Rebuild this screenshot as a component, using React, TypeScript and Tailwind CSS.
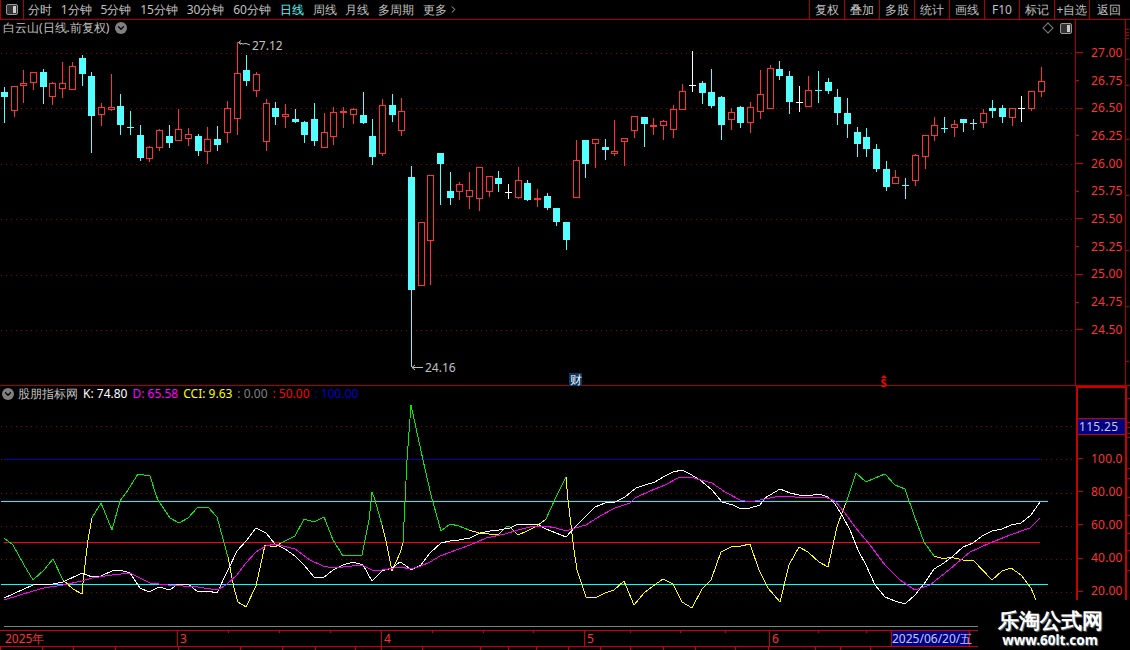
import { ChevronDown, ChevronRight } from "lucide-react";

type Candle = [number, number, number, number, "c" | "r" | "w"];

// high, body top, body bottom, low (pixel rows of the screenshot)
const candles: Candle[] = [
  [87, 92, 97, 123, "c"], [86, 86, 111, 117, "r"], [70, 83, 86, 103, "r"], [72, 72, 83, 90, "r"],
  [69, 72, 87, 104, "c"], [82, 83, 97, 105, "r"], [62, 83, 89, 98, "r"], [62, 66, 90, 90, "r"],
  [55, 58, 74, 86, "c"], [72, 76, 116, 153, "c"], [103, 107, 115, 126, "r"], [74, 107, 110, 111, "r"],
  [94, 106, 125, 135, "c"], [111, 127, 127, 135, "c"], [125, 135, 158, 161, "c"], [146, 147, 159, 162, "r"],
  [129, 130, 148, 151, "r"], [125, 136, 143, 148, "c"], [109, 129, 141, 141, "r"], [128, 134, 139, 146, "r"],
  [134, 136, 151, 156, "c"], [127, 139, 152, 164, "r"], [126, 139, 145, 151, "c"], [101, 108, 133, 143, "r"],
  [42, 73, 119, 135, "r"], [55, 70, 81, 86, "c"], [72, 74, 91, 97, "r"], [99, 103, 142, 151, "r"],
  [102, 108, 117, 125, "c"], [104, 114, 117, 128, "r"], [109, 119, 122, 123, "c"], [121, 122, 135, 143, "c"],
  [103, 119, 141, 146, "c"], [113, 132, 148, 148, "r"], [107, 112, 137, 145, "r"], [107, 111, 113, 128, "r"],
  [108, 109, 115, 124, "r"], [92, 115, 123, 124, "c"], [119, 136, 157, 165, "c"], [99, 105, 154, 156, "r"],
  [94, 105, 115, 122, "c"], [98, 111, 131, 136, "r"], [166, 177, 290, 367, "c"], [222, 222, 286, 286, "r"],
  [175, 175, 241, 285, "r"], [153, 153, 164, 205, "c"], [172, 191, 198, 205, "c"], [182, 184, 192, 200, "r"],
  [172, 190, 197, 209, "r"], [167, 167, 199, 211, "r"], [176, 176, 192, 197, "r"], [171, 178, 184, 192, "c"],
  [184, 192, 192, 199, "w"], [167, 180, 198, 199, "r"], [180, 183, 200, 201, "c"], [189, 198, 200, 207, "r"],
  [193, 196, 208, 210, "c"], [208, 208, 222, 226, "c"], [222, 222, 240, 250, "c"], [140, 160, 198, 198, "r"],
  [140, 140, 164, 178, "c"], [139, 139, 144, 168, "r"], [139, 147, 150, 160, "c"], [120, 151, 154, 156, "r"],
  [138, 138, 142, 166, "r"], [116, 116, 131, 138, "r"], [117, 117, 124, 147, "c"], [118, 125, 127, 135, "r"],
  [120, 121, 126, 140, "r"], [105, 109, 130, 138, "r"], [84, 91, 110, 110, "r"], [51, 85, 85, 92, "w"],
  [81, 83, 93, 104, "c"], [69, 92, 106, 108, "c"], [96, 97, 125, 140, "c"], [108, 112, 120, 130, "r"],
  [106, 107, 123, 128, "c"], [102, 107, 123, 133, "r"], [70, 94, 112, 119, "r"], [65, 68, 109, 109, "r"],
  [61, 69, 76, 80, "c"], [71, 76, 102, 114, "c"], [86, 102, 102, 112, "w"], [76, 90, 107, 107, "r"],
  [71, 90, 90, 103, "c"], [78, 82, 91, 94, "c"], [89, 97, 113, 125, "c"], [98, 113, 124, 138, "c"],
  [127, 132, 144, 157, "c"], [128, 137, 149, 157, "c"], [144, 149, 169, 172, "c"], [161, 169, 187, 191, "c"],
  [170, 177, 184, 184, "r"], [178, 185, 185, 199, "c"], [154, 155, 181, 186, "r"], [135, 135, 157, 169, "r"],
  [117, 125, 136, 141, "r"], [117, 128, 128, 133, "c"], [120, 124, 128, 137, "r"], [119, 119, 123, 132, "c"],
  [119, 123, 123, 130, "c"], [109, 113, 123, 128, "r"], [100, 108, 111, 118, "c"], [105, 108, 117, 123, "c"],
  [108, 108, 118, 126, "r"], [96, 108, 108, 122, "w"], [91, 91, 109, 111, "r"], [67, 81, 92, 97, "r"],
];

const candleColor = { c: "#54ffff", r: "#ff3232", w: "#ffffff" };

const kLine =
  "4,598 33,585 53,584 63,582 82,573 92,577 101,576 112,571 120,570 130,573 140,588 149,592 159,587 170,590 178,584 188,584 198,592 208,591 217,593 228,570 237,551 246,541 256,528 266,533 275,544 285,549 295,556 304,565 314,577 323,578 333,570 343,565 353,562 363,565 372,581 382,571 392,568 400,562 405,565 411,570 421,565 430,553 441,543 450,541 459,540 470,538 480,533 490,531 499,530 510,528 518,524 537,524 546,529 556,533 566,537 575,527 585,517 595,507 605,503 615,502 625,497 636,488 645,485 655,482 665,476 673,472 682,470 690,474 700,480 712,490 722,502 733,505 741,509 750,508 760,505 765,498 770,495 780,489 790,493 799,495 808,496 819,494 828,497 835,504 843,517 850,530 858,550 866,565 875,585 885,597 895,601 905,604 915,595 924,584 934,569 944,563 953,556 963,547 973,543 982,536 992,531 1002,529 1011,525 1021,523 1031,515 1040,502";

const dLine =
  "4,600 33,591 44,588 63,585 82,581 92,578 112,575 130,573 150,583 168,585 198,587 217,590 226,585 237,575 246,563 256,552 266,546 275,544 295,549 310,560 323,566 333,568 343,567 362,565 372,570 382,570 400,567 411,569 421,566 430,562 440,556 459,549 470,545 486,538 505,534 518,530 530,527 545,526 556,528 566,531 575,528 586,525 600,516 615,508 630,503 635,498 650,491 665,485 680,477 690,477 712,483 725,492 740,500 750,502 765,499 780,496 795,497 810,497 825,497 835,501 845,513 855,527 870,545 885,565 900,580 915,590 930,585 950,569 970,552 990,543 1010,535 1030,528 1040,518";

const cciParts: [string, string][] = [
  ["#00ee00", "4,538 13,545 24,565 33,580 44,570 53,559 63,580"],
  ["#ffff00", "63,580 73,589 82,594 84,573 88,540 92,518"],
  ["#00ee00", "92,518 101,503 112,530 120,501 128,490 138,474 150,476 156,495 158,500 170,518 179,523 188,518 198,507 208,507 217,517 226,550 228,557"],
  ["#ffff00", "228,557 234,588 238,602 246,607 256,586 265,545 275,547 281,543"],
  ["#00ee00", "281,543 295,536 304,519 314,522 324,517 333,540 343,556 353,555 362,555 369,520 372,492 375,500 382,525"],
  ["#ffff00", "382,525 386,541 392,571 400,553 403,543"],
  ["#00ee00", "403,543 407,460 411,405 423,460 431,495 441,531 450,524 459,526 469,530"],
  ["#ffff00", "469,530 479,533 489,534 499,534 503,530"],
  ["#00ee00", "503,530 507,526 510,527"],
  ["#ffff00", "510,527 518,535 527,531 537,526 546,519"],
  ["#00ee00", "546,519 556,497 566,477"],
  ["#ffff00", "566,477 568,500 574,550 577,570 586,597 595,598 605,593 614,590 624,581 634,605 644,593 653,586 663,579 673,584 682,602 692,608 702,589 711,580 721,552 731,547 741,546 750,544 759,570 768,588 780,602 789,565 799,547 808,552 819,562 828,567 837,527 843,510 846,503"],
  ["#00ee00", "846,503 856,473 866,482 875,478 885,474 895,485 905,489 914,515 924,542 934,556"],
  ["#ffff00", "934,556 944,559 950,557 963,560 973,560 992,580 1002,571 1011,568 1021,575 1031,588 1036,600"],
];

const tabs = ["分时", "1分钟", "5分钟", "15分钟", "30分钟", "60分钟", "日线", "周线", "月线", "多周期", "更多"];
const tools = ["复权", "叠加", "多股", "统计", "画线", "F10", "标记", "+自选"];
const priceTicks = ["27.00", "26.75", "26.50", "26.25", "26.00", "25.75", "25.50", "25.25", "25.00", "24.75", "24.50"];
const indicatorTicks = ["100.0", "80.00", "60.00", "40.00", "20.00"];
const indicatorLegend = [
  { text: "D: 65.58", cls: "text-[#ff00ff]" },
  { text: "CCI: 9.63", cls: "text-[#ffff00]" },
  { text: ": 0.00", cls: "text-[#808080]" },
  { text: ": 50.00", cls: "text-[#ff0000]" },
  { text: ": 100.00", cls: "text-[#0000cc]" },
];

function PanelIcon() {
  return (
    <svg width="12" height="11" viewBox="0 0 12 11">
      <rect x="0.5" y="0.5" width="11" height="10" rx="1.5" fill="#333" stroke="#999" />
      <rect x="7" y="2" width="3" height="7" fill="#ccc" />
    </svg>
  );
}

function CollapseDot() {
  return (
    <span className="flex h-3 w-3 items-center justify-center rounded-full bg-[#808080]">
      <ChevronDown size={10} strokeWidth={3} className="text-black" />
    </span>
  );
}

function Dotted({ y, x2 = 1075 }: { y: number; x2?: number }) {
  return <line x1="1" x2={x2} y1={y + 0.5} y2={y + 0.5} stroke="#8c0000" strokeDasharray="1 4" />;
}

function Candles() {
  return (
    <g shapeRendering="crispEdges">
      {candles.map(([high, top, bottom, low, kind], i) => {
        const x = Math.round(4 + i * 9.69);
        const color = candleColor[kind];
        return (
          <g key={i} fill={color}>
            {top > high && <rect x={x} y={high} width="1" height={top - high} />}
            {low > bottom && <rect x={x} y={bottom} width="1" height={low - bottom} />}
            {kind === "r" && bottom - top > 2 ? (
              <rect x={x - 2.5} y={top + 0.5} width="6" height={bottom - top - 1} fill="#000" stroke={color} />
            ) : (
              <rect x={x - 3} y={top} width="7" height={Math.max(bottom - top, 1)} />
            )}
          </g>
        );
      })}
    </g>
  );
}

function MainChart() {
  return (
    <svg className="block h-[349px] w-[1075px] overflow-visible" viewBox="0 36 1075 349">
      {[53, 108, 164, 219, 275, 330].map((y) => (
        <Dotted key={y} y={y} />
      ))}
      <Candles />
      <g stroke="#c0c0c0" fill="none">
        <path d="M238.5 42.5 L243 44 L246 43.5 L250 45 M238.5 42.5 L241 40.5 M238.5 42.5 L241 44.5" />
        <path d="M412 367.5 L423 367.5 M412 367.5 L415 365 M412 367.5 L415 370" />
      </g>
      <text x="252" y="50" fontSize="12" fill="#c0c0c0">27.12</text>
      <text x="425" y="372" fontSize="12" fill="#c0c0c0">24.16</text>
      <rect x="569" y="373" width="13" height="13" fill="#0a3560" />
      <text x="569.5" y="384" fontSize="12" fill="#f0f0f0">财</text>
      <path d="M884 375 L887 378 L881 378 Z" fill="#ff0000" />
      <text x="880.5" y="386.5" fontSize="11" fontWeight="700" fill="#ff0000">S</text>
    </svg>
  );
}

function IndicatorChart() {
  return (
    <svg className="block h-[228px] w-[1075px]" viewBox="0 402 1075 228">
      {[426, 459, 493, 526, 559, 592].map((y) => (
        <Dotted key={y} y={y} />
      ))}
      <g shapeRendering="crispEdges" fill="none">
        <line x1="4" x2="1040" y1="459.5" y2="459.5" stroke="#0000b4" />
        <line x1="4" x2="1040" y1="542.5" y2="542.5" stroke="#ff0000" />
        <line x1="1" x2="1048" y1="501.5" y2="501.5" stroke="#00ffff" />
        <line x1="1" x2="1048" y1="584.5" y2="584.5" stroke="#00ffff" />
        {cciParts.map(([color, pts], i) => (
          <polyline key={i} points={pts} stroke={color} />
        ))}
        <polyline points={kLine} stroke="#ffffff" />
        <polyline points={dLine} stroke="#ff00ff" />
        <line x1="4" x2="1075" y1="626.5" y2="626.5" stroke="#808080" />
      </g>
    </svg>
  );
}

function DateStrip() {
  return (
    <div className="relative">
      <div className="flex h-[17px] border-y border-[#c80000] text-[12px] leading-[15px] text-[#ff3232]">
        <div className="w-[177px] pl-[5px]">2025年</div>
        <div className="w-[204px] border-l border-[#c80000] pl-[2px]">3</div>
        <div className="w-[203px] border-l border-[#c80000] pl-[2px]">4</div>
        <div className="w-[185px] border-l border-[#c80000] pl-[2px]">5</div>
        <div className="w-[122px] border-l border-[#c80000] pl-[2px]">6</div>
        <div className="w-[79px] whitespace-nowrap border-x border-[#c80000] bg-[#000080] text-center text-[#c8c8ff]">2025/06/20/五</div>
      </div>
      <svg className="absolute left-0 top-0 h-[20px] w-[1075px]" viewBox="0 0 1075 20" shapeRendering="crispEdges">
        {[228, 279, 330, 432, 483, 533, 630, 680, 725, 818, 866].map((x) => (
          <rect key={x} x={x} y="1" width="1" height="2" fill="#c80000" />
        ))}
        {[0, 42, 73, 115, 178, 240, 282, 315, 355, 381, 422, 480, 508, 536, 568, 600, 630, 663, 695, 735, 768, 815, 840, 870].map((x) => (
          <rect key={x} x={x} y="17" width="1" height="3" fill="#c80000" />
        ))}
      </svg>
    </div>
  );
}

function EdgeTicks({ rows, height }: { rows: number[]; height: number }) {
  return (
    <svg className="h-full w-[3px]" viewBox={`0 0 3 ${height}`} shapeRendering="crispEdges">
      {rows.map((y) => (
        <rect key={y} x="0" y={y} width="3" height="1" fill="#aa0000" />
      ))}
    </svg>
  );
}

function PriceAxis() {
  return (
    <div className="flex h-full">
      <div className="h-full w-[51px] border-x border-[#aa0000] pt-[19px]">
        {priceTicks.map((t, i) => (
          <div key={t} className="flex h-[27.7px] items-center text-[12px] tracking-[0.2px] text-[#ff3232]">
            <div className="flex w-[15px]">
              <div className={i % 2 === 0 ? "h-px w-[7px] bg-[#c80000]" : "h-px w-[3px] bg-[#c80000]"} />
            </div>
            {t}
          </div>
        ))}
      </div>
      <EdgeTicks rows={[9, 12, 15, 18, 39, 65, 119, 175, 230, 286, 341]} height={365} />
    </div>
  );
}

function IndicatorAxis() {
  return (
    <div className="flex h-[214px]">
      <div className="ml-px w-[51px] border-x-2 border-t-2 border-[#c80000]">
        <div className="mt-[30px] h-[17px] border-y border-[#c80000] bg-[#000080] pl-[1px] text-[12px] leading-[15px] tracking-[0.3px] text-[#c8c8e8]">
          115.25
        </div>
        <div className="pt-[7px]">
          {indicatorTicks.map((t) => (
            <div key={t} className="flex h-[33.2px] items-center text-[12px] tracking-[0.2px] text-[#ff3232]">
              <div className="w-[13px]">
                <div className="h-px w-[5px] bg-[#c80000]" />
              </div>
              {t}
            </div>
          ))}
        </div>
      </div>
      <EdgeTicks rows={[12, 36, 41, 47, 51, 82, 92, 111, 129, 147, 164, 184]} height={214} />
    </div>
  );
}

export default function App() {
  return (
    <div className="relative flex h-[650px] w-[1130px] flex-col overflow-hidden bg-black font-['Liberation_Sans','Noto_Sans_CJK_SC',sans-serif] text-[12px] text-[#c0c0c0]">
      <div className="flex h-5 border-b border-[#aa0000]">
        <div className="flex w-6 items-center justify-center border-x border-[#aa0000] pr-[1px]">
          <PanelIcon />
        </div>
        <div className="flex items-center gap-[8.8px] pl-[4px]">
          {tabs.map((t) => (
            <span key={t} className={t === "日线" ? "text-[#54ffff]" : ""}>
              {t}
            </span>
          ))}
          <ChevronRight size={11} className="-ml-[8px] text-[#c0c0c0]" />
        </div>
        <div className="ml-auto flex">
          {tools.map((t) => (
            <div key={t} className="flex w-[35px] items-center justify-center border-l border-[#aa0000] whitespace-nowrap">
              {t}
            </div>
          ))}
          <div className="flex w-[41px] items-center justify-center border-l border-[#aa0000] pr-[3px]">返回</div>
        </div>
      </div>

      <div className="flex h-[366px] border-b border-[#aa0000]">
        <div className="w-[1075px]">
          <div className="flex h-4 items-center justify-between pl-[3px] pr-[3px]">
            <div className="flex items-center gap-[6px]">
              <span>白云山(日线.前复权)</span>
              <CollapseDot />
            </div>
            <div className="flex items-center gap-[8px]">
              <div className="h-2 w-2 rotate-45 border border-[#808080]" />
              <PanelIcon />
            </div>
          </div>
          <MainChart />
        </div>
        <PriceAxis />
      </div>

      <div className="flex flex-1">
        <div className="w-[1075px]">
          <div className="flex h-4 items-center gap-[5px] pl-[2px]">
            <div className="flex items-center gap-1">
              <CollapseDot />
              <span className="text-[#c0c0c0]">股朋指标网</span>
            </div>
            <span className="text-white">K: 74.80</span>
            {indicatorLegend.map((l) => (
              <span key={l.text} className={l.cls}>
                {l.text}
              </span>
            ))}
          </div>
          <IndicatorChart />
          <DateStrip />
        </div>
        <IndicatorAxis />
      </div>

      {/* watermark sits on top of the bottom right corner */}
      <div className="absolute bottom-0 right-0 flex h-[50px] w-[152px] flex-col items-center bg-black pr-[8px] pt-[9px]">
        <div className="text-[20.5px] font-bold leading-[22px] text-white [text-shadow:1px_1px_1px_#777]">乐淘公式网</div>
        <div className="mt-[2px] font-['Liberation_Serif',serif] text-[13.5px] font-bold leading-[15px] text-white [text-shadow:1px_1px_1px_#777]">
          www.60lt.com
        </div>
      </div>
    </div>
  );
}
